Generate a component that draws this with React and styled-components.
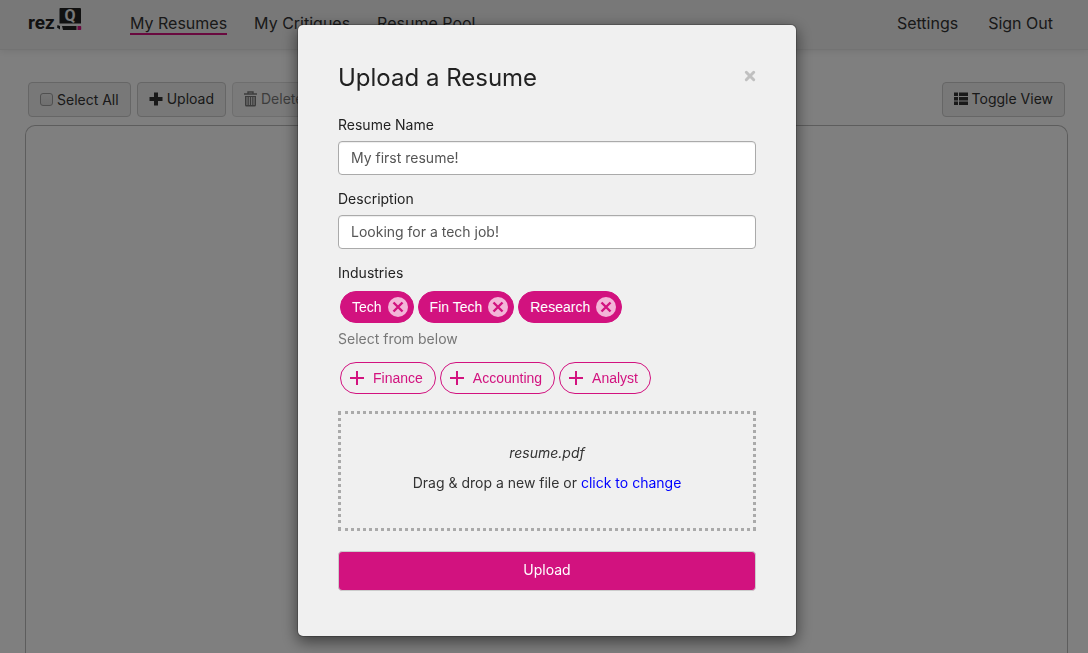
import React, { useState } from "react";
import styled, { createGlobalStyle, css } from "styled-components";

const pink = "#d2127f";

const GlobalStyle = createGlobalStyle`
  *, *::before, *::after { box-sizing: border-box; }
  html, body, #root { height: 100%; }
  body {
    margin: 0;
    overflow: hidden;
    background: #fff;
    color: #333;
    font: 14px/20px Inter, Roboto, "Liberation Sans", sans-serif;
  }
  button, input { font: inherit; color: inherit; }
`;

const Page = styled.div`
  display: flex;
  flex-direction: column;
  min-height: 100%;
`;

const Header = styled.header`
  display: flex;
  align-items: center;
  justify-content: space-between;
  height: 50px;
  padding: 0 35px 2px 28px;
  background: #f0f0f0;
  border-bottom: 1px solid #e6e6e6;
  box-shadow: 0 1px 8px rgba(0, 0, 0, 0.1);
`;

const Nav = styled.nav`
  display: flex;
  align-items: center;
  gap: ${(p) => (p.$primary ? "27px" : "30px")};
`;

const Brand = styled.a`
  display: flex;
  margin-right: 21px;
  padding-bottom: 8px;
`;

const NavLink = styled.a`
  color: #333;
  font-size: 16px;
  line-height: 20px;
  text-decoration: none;
  border-bottom: 2px solid ${(p) => (p.$active ? pink : "transparent")};
`;

const Main = styled.main`
  display: flex;
  flex: 1;
  flex-direction: column;
  gap: 8px;
  padding: 32px 20px 0 25px;
`;

const Toolbar = styled.div`
  display: flex;
  gap: 6px;
  padding: 0 3px;
`;

const toolStyle = css`
  display: flex;
  align-items: center;
  gap: 4px;
  height: 35px;
  padding: 0 11px 2px;
  border: 1px solid #ccc;
  border-radius: 4px;
  background: #f0f0f0;
  color: #333;
`;

const ToolButton = styled.button`
  ${toolStyle}
  margin-left: ${(p) => (p.$end ? "auto" : "0")};
  &:disabled { opacity: 0.65; }
`;

const ToolLabel = styled.label`
  ${toolStyle}
  padding: 1px 11px 0;
`;

const Check = styled.input`
  appearance: none;
  width: 13px;
  height: 13px;
  margin: 0 0 2px;
  border: 1px solid #a0a0a0;
  border-radius: 3px;
  background: linear-gradient(#ececec, #dedede);
`;

const Panel = styled.section`
  flex: 1;
  border: 1px solid #bbb;
  border-bottom: 0;
  border-radius: 10px 10px 0 0;
`;

const Backdrop = styled.div`
  position: fixed;
  inset: 0;
  display: flex;
  justify-content: center;
  align-items: flex-start;
  padding: 24px 0 0 6px;
  background: rgba(0, 0, 0, 0.5);
`;

const Dialog = styled.form`
  width: 500px;
  max-width: 100%;
  padding: 40px 40px 45px;
  border: 1px solid rgba(0, 0, 0, 0.2);
  border-radius: 6px;
  background: #f0f0f0;
  background-clip: padding-box;
  box-shadow: 0 5px 15px rgba(0, 0, 0, 0.5);
`;

const TitleRow = styled.div`
  display: flex;
  align-items: center;
  justify-content: space-between;
  margin-bottom: 24px;
`;

const Title = styled.h1`
  margin: 0;
  color: #222;
  font-size: 24px;
  font-weight: 400;
  line-height: 26px;
`;

const CloseButton = styled.button`
  display: flex;
  padding: 0 0 4px;
  border: 0;
  background: none;
  color: #c0c0c0;
`;

const Field = styled.div`
  display: flex;
  flex-direction: column;
  gap: 6px;
  margin-bottom: 14px;
`;

const Label = styled.label`
  color: #222;
`;

const TextInput = styled.input`
  width: 100%;
  height: 34px;
  padding: 0 12px 2px;
  border: 1px solid #aaa;
  border-radius: 4px;
  background: #fff;
  color: #555;
  box-shadow: inset 0 1px 1px rgba(0, 0, 0, 0.075);
`;

const Group = styled.div`
  color: #222;
`;

const Pills = styled.div`
  display: flex;
  flex-wrap: wrap;
  gap: 4px;
  padding: 0 2px;
  margin: ${(p) => (p.$selected ? "8px 0 6px" : "13px 0 17px")};
`;

const pillStyle = css`
  display: flex;
  align-items: center;
  height: 32px;
  border: 1px solid ${pink};
  border-radius: 16px;
  font: 14px/20px "Liberation Sans", Arial, sans-serif;
`;

const SelectedPill = styled.span`
  ${pillStyle}
  gap: 6px;
  padding: 0 5px 0 11px;
  background: ${pink};
  color: #fff;
`;

const RemoveButton = styled.button`
  display: flex;
  align-items: center;
  justify-content: center;
  width: 20px;
  height: 20px;
  padding: 0;
  border: 0;
  border-radius: 50%;
  background: #f3b5d8;
  color: ${pink};
`;

const AddPill = styled.button`
  ${pillStyle}
  gap: 9px;
  padding: 0 12px 0 9px;
  background: transparent;
  color: ${pink};
`;

const Hint = styled.div`
  color: #777;
`;

const DropZone = styled.div`
  display: flex;
  flex-direction: column;
  align-items: center;
  justify-content: center;
  gap: 10px;
  height: 120px;
  padding-bottom: 6px;
  margin-bottom: 20px;
  border: 3px dotted #aaa;
`;

const FileLink = styled.a`
  color: #00f;
  text-decoration: none;
`;

const SubmitButton = styled.button`
  display: block;
  width: 100%;
  height: 40px;
  padding: 0 0 2px;
  border: 1px solid #ccc;
  border-radius: 4px;
  background: ${pink};
  color: #fff;
`;

const Logo = () => (
  <svg width="54" height="30" viewBox="0 0 54 30" overflow="visible" role="img" aria-label="rezQ">
    <text x="0" y="24" fontFamily="Roboto, sans-serif" fontWeight="700" fontSize="19" fill="#222">rez</text>
    <path d="M32 3h20a1 1 0 0 1 1 1v14.500h-21.500V4a1 1 0 0 1 .5-1z" fill="#222" />
    <text x="42" y="16" textAnchor="middle" fontFamily="Roboto, sans-serif" fontWeight="700" fontSize="16" fill="#f0f0f0">Q</text>
    <path d="M34 21h14.500v4H35z" fill="#222" />
    <path d="M29.500 20l2.500 1v3.500l-3-2z" fill="#222" />
    <path d="M49.500 21h3a.7.7 0 0 1 .7.7v2.600a.7.7 0 0 1-.7.7h-3z" fill={pink} />
  </svg>
);

const PlusGlyph = () => (
  <svg width="14" height="14" viewBox="0 0 14 14" aria-hidden="true">
    <path d="M5 0.500h4v4.500h4.500v4H9v4.500H5V9H0.500V5H5z" fill="currentColor" />
  </svg>
);

const TrashGlyph = () => (
  <svg width="13" height="16" viewBox="0 0 13 16" aria-hidden="true">
    <path d="M4 3V1h5v2M0 3h13" fill="none" stroke="currentColor" strokeWidth="1.4" />
    <path d="M1 5h11v9a1.500 1.500 0 0 1-1.500 1.500h-8A1.500 1.500 0 0 1 1 14zM2.500 6v8h1v-8zM4.800 6v8h1v-8zM7.200 6v8h1v-8zM9.500 6v8h1v-8z" fill="currentColor" fillRule="evenodd" />
  </svg>
);

const ListGlyph = () => (
  <svg width="14" height="14" viewBox="0 0 14 14" aria-hidden="true">
    <path d="M0 0.500h4v3.500H0zM5 0.500h9v3.500H5zM0 5h4v3.500H0zM5 5h9v3.500H5zM0 9.500h4v3.500H0zM5 9.500h9v3.500H5z" fill="currentColor" />
  </svg>
);

const CloseGlyph = () => (
  <svg width="12" height="12" viewBox="0 0 12 12" aria-hidden="true">
    <path d="M2.300 2.300l7.400 7.400M9.700 2.300l-7.400 7.400" stroke="currentColor" strokeWidth="3" strokeLinecap="round" />
  </svg>
);

const RemoveGlyph = () => (
  <svg width="12" height="12" viewBox="0 0 12 12" aria-hidden="true">
    <path d="M1.500 1.500l9 9M10.500 1.500l-9 9" stroke="currentColor" strokeWidth="2.400" />
  </svg>
);

const AddGlyph = () => (
  <svg width="14" height="14" viewBox="0 0 14 14" aria-hidden="true">
    <path d="M7 0v14M0 7h14" stroke="currentColor" strokeWidth="2" />
  </svg>
);

export default function App() {
  const [name, setName] = useState("My first resume!");
  const [description, setDescription] = useState("Looking for a tech job!");

  return (
    <>
      <GlobalStyle />
      <Page>
        <Header>
          <Nav $primary>
            <Brand href="#home"><Logo /></Brand>
            <NavLink href="#resumes" $active>My Resumes</NavLink>
            <NavLink href="#critiques">My Critiques</NavLink>
            <NavLink href="#pool">Resume Pool</NavLink>
          </Nav>
          <Nav>
            <NavLink href="#settings">Settings</NavLink>
            <NavLink href="#signout">Sign Out</NavLink>
          </Nav>
        </Header>
        <Main>
          <Toolbar>
            <ToolLabel><Check type="checkbox" />Select All</ToolLabel>
            <ToolButton type="button"><PlusGlyph />Upload</ToolButton>
            <ToolButton type="button" disabled><TrashGlyph />Delete</ToolButton>
            <ToolButton type="button" $end><ListGlyph />Toggle View</ToolButton>
          </Toolbar>
          <Panel />
        </Main>
      </Page>
      <Backdrop>
        <Dialog role="dialog" aria-labelledby="dialog-title" onSubmit={(e) => e.preventDefault()}>
          <TitleRow>
            <Title id="dialog-title">Upload a Resume</Title>
            <CloseButton type="button" aria-label="Close"><CloseGlyph /></CloseButton>
          </TitleRow>
          <Field>
            <Label htmlFor="name">Resume Name</Label>
            <TextInput id="name" type="text" value={name} onChange={(e) => setName(e.target.value)} />
          </Field>
          <Field>
            <Label htmlFor="description">Description</Label>
            <TextInput id="description" type="text" value={description} onChange={(e) => setDescription(e.target.value)} />
          </Field>
          <Group role="group" aria-labelledby="industries">
            <div id="industries">Industries</div>
            <Pills $selected>
              {["Tech", "Fin Tech", "Research"].map((t) => (
                <SelectedPill key={t}>
                  {t}
                  <RemoveButton type="button" aria-label={`Remove ${t}`}><RemoveGlyph /></RemoveButton>
                </SelectedPill>
              ))}
            </Pills>
            <Hint>Select from below</Hint>
            <Pills>
              {["Finance", "Accounting", "Analyst"].map((t) => (
                <AddPill key={t} type="button"><AddGlyph />{t}</AddPill>
              ))}
            </Pills>
          </Group>
          <DropZone>
            <em>resume.pdf</em>
            <span>Drag &amp; drop a new file or <FileLink href="#file">click to change</FileLink></span>
          </DropZone>
          <SubmitButton type="submit">Upload</SubmitButton>
        </Dialog>
      </Backdrop>
    </>
  );
}
